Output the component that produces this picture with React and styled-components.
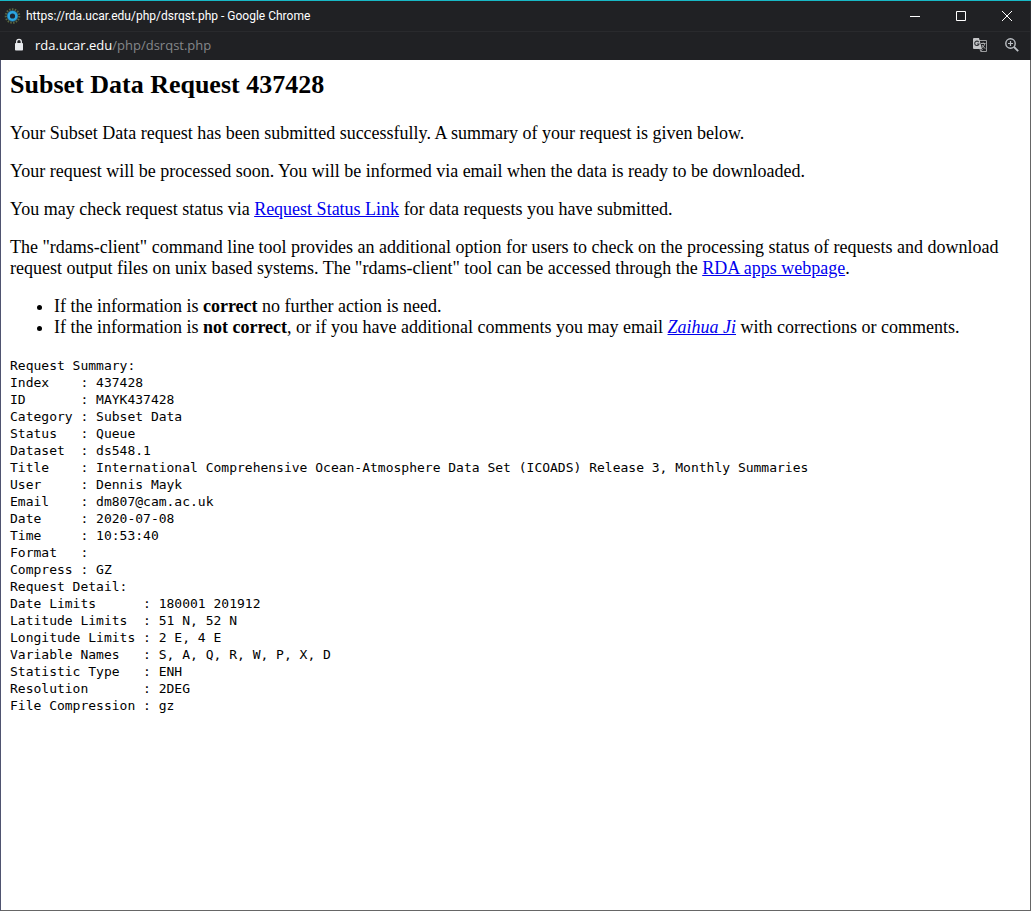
import React from "react";
import styled, { createGlobalStyle } from "styled-components";

const GlobalStyle = createGlobalStyle`
  * { box-sizing: border-box; }
  body { margin: 0; background: #fff; }
`;

const Window = styled.div`
  display: flex;
  flex-direction: column;
  min-height: 100vh;
  border-top: 1px solid #18b8c6;
  background: #fff;
`;

const Chrome = styled.header`
  border-right: 1px solid #2c2d31;
  background: #202124;
  font-family: "Open Sans", "Noto Sans", sans-serif;
`;

const TitleBar = styled.div`
  display: flex;
  align-items: center;
  height: 30px;
  padding-left: 4px;
  gap: 5px;
  color: #fff;
`;

const WindowTitle = styled.span`
  flex: 1;
  min-width: 0;
  overflow: hidden;
  white-space: nowrap;
  font-family: Roboto, sans-serif;
  font-size: 12px;
  line-height: 18px;
`;

const WindowControls = styled.div`
  display: flex;
`;

const WindowButton = styled.button`
  display: flex;
  align-items: center;
  justify-content: center;
  width: 46px;
  height: 28px;
  padding: 0;
  border: 0;
  background: transparent;
  color: #fff;
`;

const AddressBar = styled.div`
  display: flex;
  align-items: center;
  height: 29px;
  padding: 0 10px 2px 13px;
  border-top: 1px solid #292a2d;
`;

const Address = styled.span`
  flex: 1;
  padding-left: 10px;
  color: #85878a;
  font-size: 13px;
  line-height: 18px;
`;

const Host = styled.span`
  color: #fff;
`;

const ToolButton = styled.button`
  display: flex;
  align-items: center;
  justify-content: center;
  width: 16px;
  height: 16px;
  margin-left: 16px;
  padding: 0;
  border: 0;
  background: transparent;
`;

const Page = styled.main`
  flex: 1;
  padding: 9px 8px 18px 9px;
  border: 1px solid #666;
  border-top: 0;
  border-left-color: #4f5470;
  background: #fff;
  color: #000;
  font-family: "Liberation Serif", "Times New Roman", serif;
  font-size: 18px;
  line-height: 21px;
`;

const Heading = styled.h2`
  margin: 0 0 23px;
  font-size: 26px;
  line-height: 31px;
`;

const Paragraph = styled.p`
  margin: 0 0 17px;
`;

const Notes = styled.ul`
  margin: 0 0 19px;
  padding-left: 44px;
`;

const Link = styled.a`
  color: #0000ee;
  text-decoration: underline;
`;

const Summary = styled.pre`
  margin: 0;
  font-family: "DejaVu Sans Mono", monospace;
  font-size: 13px;
  line-height: 17px;
`;

const requestSummary = [
  ["Index", "437428"],
  ["ID", "MAYK437428"],
  ["Category", "Subset Data"],
  ["Status", "Queue"],
  ["Dataset", "ds548.1"],
  ["Title", "International Comprehensive Ocean-Atmosphere Data Set (ICOADS) Release 3, Monthly Summaries"],
  ["User", "Dennis Mayk"],
  ["Email", "dm807@cam.ac.uk"],
  ["Date", "2020-07-08"],
  ["Time", "10:53:40"],
  ["Format", ""],
  ["Compress", "GZ"],
];

const requestDetail = [
  ["Date Limits", "180001 201912"],
  ["Latitude Limits", "51 N, 52 N"],
  ["Longitude Limits", "2 E, 4 E"],
  ["Variable Names", "S, A, Q, R, W, P, X, D"],
  ["Statistic Type", "ENH"],
  ["Resolution", "2DEG"],
  ["File Compression", "gz"],
];

const formatRows = (rows, width) =>
  rows.map(([name, value]) => `${name.padEnd(width)} : ${value}`).join("\n");

const SiteIcon = () => (
  <svg width="17" height="17" viewBox="0 0 17 17" fill="none" aria-hidden="true">
    <circle cx="8.5" cy="8" r="6.7" stroke="#5a6740" strokeWidth="2.2" strokeDasharray="1.5 1.3" />
    <circle cx="8.5" cy="8" r="5" stroke="#24668a" strokeWidth="1.4" />
    <circle cx="8.5" cy="8" r="3.8" fill="#1b2733" stroke="#2ba6e0" strokeWidth="2.4" />
  </svg>
);

const LockIcon = () => (
  <svg width="12" height="14" viewBox="0 0 12 14" fill="none" aria-hidden="true">
    <rect x="2" y="5" width="8" height="7.5" rx="0.8" fill="#e8eaed" />
    <path d="M3.7 5.5V3.6a2.3 2.3 0 0 1 4.6 0v1.9" stroke="#e8eaed" strokeWidth="1.3" />
  </svg>
);

const TranslateIcon = () => (
  <svg width="16" height="16" viewBox="0 0 16 16" fill="none" aria-hidden="true">
    <path d="M7 3.5h7.5v11H8.7L8 12" stroke="#9b9c9e" />
    <path d="M2 1h5l3 11H2a1 1 0 0 1-1-1V2a1 1 0 0 1 1-1Z" fill="#c4c5c7" />
    <path d="M6.7 5.1A2.2 2.2 0 1 0 7 7H4.9" stroke="#34363a" strokeWidth="1.1" />
    <path d="M9 6.5h4.5M11.2 5.5v1M12.8 6.5c-.4 2-1.6 3.5-3.2 4.6M10 8c.7 1.5 1.9 2.7 3.4 3.5M8.7 14l2.1-2.2" stroke="#a9aaac" />
  </svg>
);

const ZoomIcon = () => (
  <svg width="16" height="16" viewBox="0 0 16 16" fill="none" stroke="#bdc1c6" aria-hidden="true">
    <circle cx="6.5" cy="6.5" r="4.7" strokeWidth="1.4" />
    <path d="M10 10l4.2 4.2" strokeWidth="1.8" />
    <path d="M4 6.5h5M6.5 4v5" strokeWidth="1.2" />
  </svg>
);

const ControlIcon = ({ d }) => (
  <svg width="12" height="12" viewBox="0 0 12 12" fill="none" stroke="currentColor" aria-hidden="true">
    <path d={d} />
  </svg>
);

export default function App() {
  return (
    <Window>
      <GlobalStyle />
      <Chrome>
        <TitleBar>
          <SiteIcon />
          <WindowTitle>https://rda.ucar.edu/php/dsrqst.php - Google Chrome</WindowTitle>
          <WindowControls>
            <WindowButton aria-label="Minimize"><ControlIcon d="M1 6.5h10" /></WindowButton>
            <WindowButton aria-label="Maximize"><ControlIcon d="M1.5 1.5h9v9h-9z" /></WindowButton>
            <WindowButton aria-label="Close"><ControlIcon d="M1 1l10 10M11 1L1 11" /></WindowButton>
          </WindowControls>
        </TitleBar>
        <AddressBar>
          <LockIcon />
          <Address><Host>rda.ucar.edu</Host>/php/dsrqst.php</Address>
          <ToolButton aria-label="Translate this page"><TranslateIcon /></ToolButton>
          <ToolButton aria-label="Zoom"><ZoomIcon /></ToolButton>
        </AddressBar>
      </Chrome>
      <Page>
        <Heading>Subset Data Request 437428</Heading>
        <Paragraph>
          Your Subset Data request has been submitted successfully. A summary of your request is given below.
        </Paragraph>
        <Paragraph>
          Your request will be processed soon. You will be informed via email when the data is ready to be downloaded.
        </Paragraph>
        <Paragraph>
          You may check request status via <Link href="#status">Request Status Link</Link> for data requests you have submitted.
        </Paragraph>
        <Paragraph>
          The "rdams-client" command line tool provides an additional option for users to check on the processing status of requests and download request output files on unix based systems. The "rdams-client" tool can be accessed through the <Link href="#apps">RDA apps webpage</Link>.
        </Paragraph>
        <Notes>
          <li>If the information is <b>correct</b> no further action is need.</li>
          <li>
            If the information is <b>not correct</b>, or if you have additional comments you may email{" "}
            <Link href="#contact"><i>Zaihua Ji</i></Link> with corrections or comments.
          </li>
        </Notes>
        <Summary>
          {`Request Summary:\n${formatRows(requestSummary, 8)}\nRequest Detail:\n${formatRows(requestDetail, 16)}`}
        </Summary>
      </Page>
    </Window>
  );
}
